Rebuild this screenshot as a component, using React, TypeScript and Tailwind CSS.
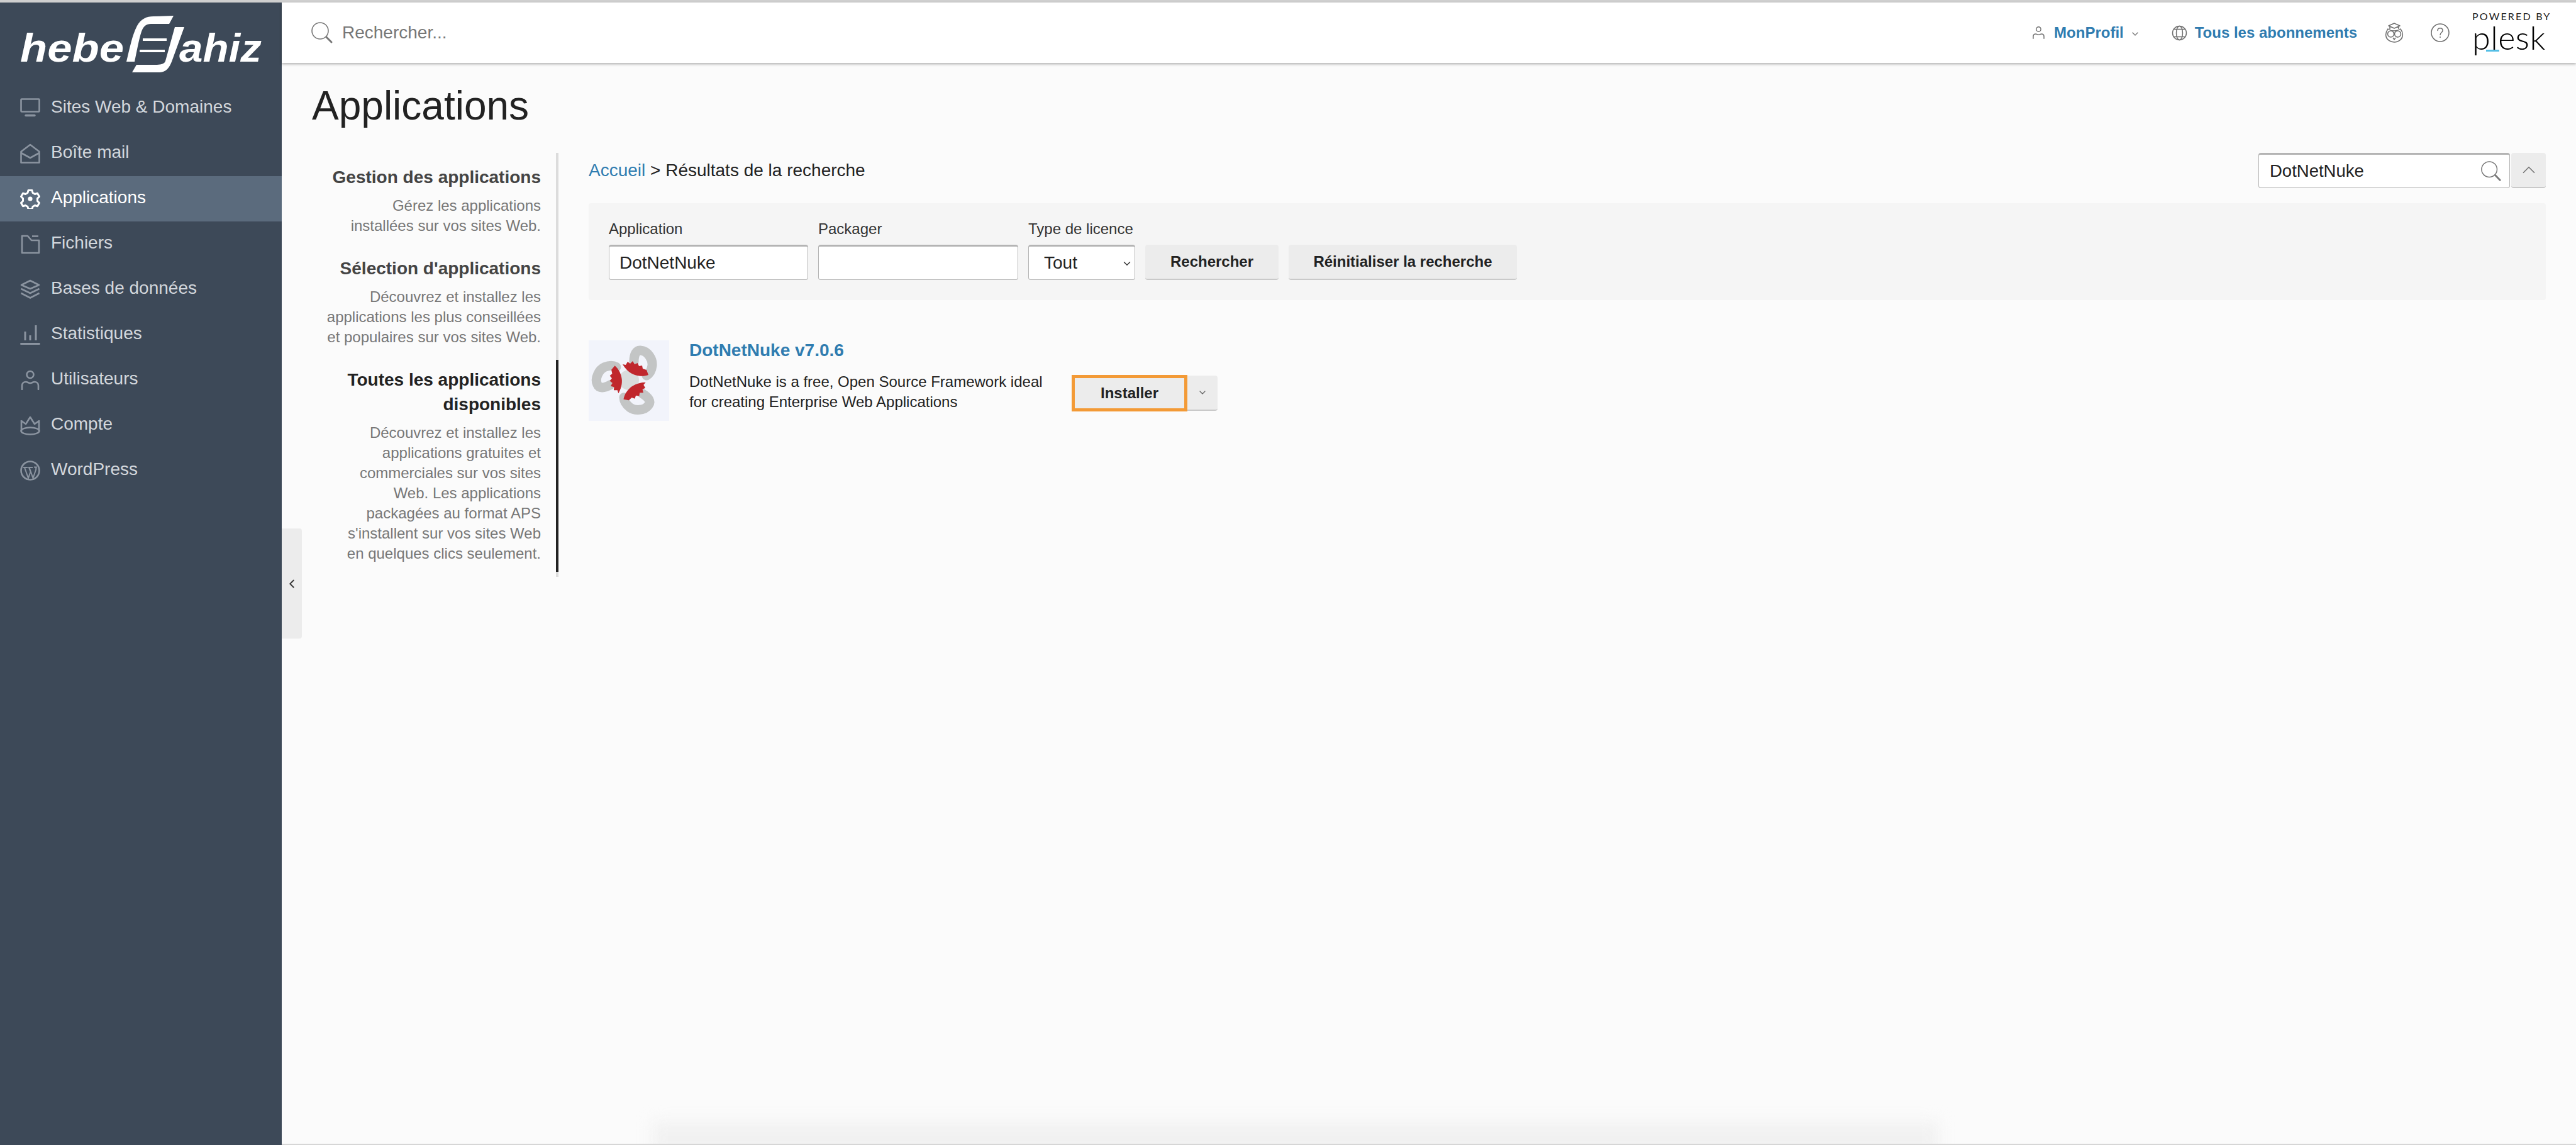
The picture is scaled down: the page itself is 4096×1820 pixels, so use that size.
import { ChevronDown, ChevronLeft, ChevronUp } from "lucide-react"
import type { ReactNode } from "react"

const iconProps = {
  width: 32,
  height: 32,
  viewBox: "0 0 32 32",
  fill: "none",
  stroke: "currentColor",
  strokeWidth: 2.6,
}

function IconMonitor() {
  return (
    <svg {...iconProps}>
      <rect x="1.5" y="1.5" width="29" height="20" rx="1" />
      <path d="M9 27.5h14" strokeWidth="3.4" strokeLinecap="round" />
    </svg>
  )
}

function IconMail() {
  return (
    <svg {...iconProps}>
      <path d="M1.5 13 16 2l14.5 11v17.5h-29z" strokeLinejoin="round" />
      <path d="M1.5 15 16 23l14.5-8" />
    </svg>
  )
}

function IconGear() {
  return (
    <svg {...iconProps} strokeWidth={3}>
      <path
        d="M13 2.5h6l1 4 3.5 2 4-1.2 3 5.2-3 2.9v4.2l3 2.9-3 5.2-4-1.2-3.5 2-1 4h-6l-1-4-3.5-2-4 1.2-3-5.2 3-2.9v-4.2l-3-2.9 3-5.2 4 1.2 3.5-2z"
        strokeLinejoin="round"
      />
      <circle cx="16" cy="16" r="3.6" fill="currentColor" stroke="none" />
    </svg>
  )
}

function IconFolder() {
  return (
    <svg {...iconProps}>
      <path d="M3 3h9l6 7h12v20H3z" strokeLinejoin="round" />
      <path d="M19 3.5h10" />
    </svg>
  )
}

function IconLayers() {
  return (
    <svg {...iconProps}>
      <path d="M16 2 30 9l-14 6L2 9z" strokeLinejoin="round" />
      <path d="m1.5 15 14.5 7 14.5-7M1.5 22l14.5 7.5L30.5 22" />
    </svg>
  )
}

function IconChart() {
  return (
    <svg {...iconProps}>
      <path d="M1.5 30.5h29" strokeWidth="3" strokeLinecap="round" />
      <path d="M8 11v14M16 17v8M25 1v24" strokeWidth="3" />
    </svg>
  )
}

function IconUser() {
  return (
    <svg {...iconProps}>
      <circle cx="16" cy="7.5" r="5.5" />
      <path d="M3 31v-6c0-4 3-6 6-6 3 0 4 2 7 2s4-2 7-2c3 0 6 2 6 6v6" strokeLinecap="round" />
    </svg>
  )
}

function IconCrown() {
  return (
    <svg {...iconProps}>
      <path d="M2 8v17M30 8v17M2 9l7 5 7-11 7 11 7-5" strokeLinejoin="round" />
      <ellipse cx="16" cy="25" rx="14.5" ry="5.5" />
    </svg>
  )
}

function IconWordpress() {
  return (
    <svg {...iconProps}>
      <circle cx="16" cy="16" r="14.5" />
      <path
        d="M5 11h7M13 11h7M22 10.5h5M7 11l6 17 3.5-10-2.5-7M14.5 11l6 17 4.5-13c.8-2 .5-3-.5-4.5"
        strokeWidth="2"
      />
    </svg>
  )
}

function IconGlobe() {
  return (
    <svg width="25" height="25" viewBox="0 0 25 25" fill="none" stroke="#6f6f6f" strokeWidth="1.5">
      <circle cx="12.5" cy="12.5" r="11" />
      <ellipse cx="12.5" cy="12.5" rx="5" ry="11" />
      <path d="M3 6.5h19M3 18.5h19" />
    </svg>
  )
}

function IconOwl() {
  return (
    <svg width="30" height="32" viewBox="0 0 30 32" fill="none" stroke="#6f6f6f" strokeWidth="1.5">
      <path d="m15 1 9 4-9 4-9-4zM8 6v4M22 6v4" strokeLinejoin="round" />
      <path d="M5 10c-3 4-4 8-3 12 1 5 7 9 13 9s12-4 13-9c1-4 0-8-3-12-3 2-6 3-10 3s-7-1-10-3z" />
      <circle cx="9.5" cy="18" r="5" />
      <circle cx="20.5" cy="18" r="5" />
      <path d="m13 24 2 3 2-3" />
    </svg>
  )
}

function IconHelp() {
  return (
    <svg width="30" height="30" viewBox="0 0 30 30" fill="none" stroke="#6f6f6f" strokeWidth="1.5">
      <circle cx="15" cy="15" r="14" />
      <path d="M11 11.5c0-5 8-5 8 0 0 3.5-4 3-4 7" strokeLinecap="round" />
      <circle cx="15" cy="22" r="1" fill="#6f6f6f" stroke="none" />
    </svg>
  )
}

function IconSearch({ size }: { size: number }) {
  return (
    <svg width={size} height={size} viewBox="0 0 36 36" fill="none" stroke="#777" strokeWidth="1.6">
      <circle cx="15" cy="15" r="13" />
      <path d="m25 25 8 8" strokeWidth="3" strokeLinecap="round" />
    </svg>
  )
}

function HebergLogo() {
  return (
    <svg width="400" height="120" viewBox="0 0 400 120" className="ml-[32px]">
      <g fontFamily="'Liberation Sans', Arial, sans-serif" fontWeight="700" fontStyle="italic" fill="#fff">
        <text x="0" y="94" fontSize="63" textLength="165" lengthAdjust="spacingAndGlyphs">
          hebe
        </text>
        <text x="253" y="94" fontSize="63" textLength="131" lengthAdjust="spacingAndGlyphs">
          ahiz
        </text>
      </g>
      <path
        d="M169 94c5-20 9-42 17-57 6-11 15-15 26-15l32-1-7 13h-29c-8 0-12 4-15 12-4 12-7 29-11 48z"
        fill="#fff"
      />
      <path
        d="M261 39h-15l-15 54c-1 4-6 6-16 6h-30l-7 12h43c11 0 16-7 20-17z"
        fill="#fff"
      />
      <path d="M195 59h38M190 77h40" stroke="#fff" strokeWidth="4" />
    </svg>
  )
}

function DnnIcon() {
  const arm = (
    <g>
      <path d="M72 34c0-12 4-19 11-18 11 1 19 14 18 24-1 8-4 13-9 16" fill="none" stroke="#c3c5c5" strokeWidth="15" strokeLinecap="round" />
      <path
        d="M54 38l5 1 3-5 4 3 4-4 3 5 5-2 2 5 5-1 1 5 6 2 3 8c-8 3-17 2-24-1-7-3-13-9-17-16z"
        fill="#c0272d"
      />
    </g>
  )
  return (
    <svg width="128" height="128" viewBox="0 0 128 128" className="shrink-0 bg-[#f2f4fb]">
      <circle cx="64" cy="63" r="16" fill="#d9dcdc" />
      {arm}
      <g transform="rotate(120 64 63)">{arm}</g>
      <g transform="rotate(240 64 63)">{arm}</g>
    </svg>
  )
}

const navItems: { label: string; icon: ReactNode; active?: boolean }[] = [
  { label: "Sites Web & Domaines", icon: <IconMonitor /> },
  { label: "Boîte mail", icon: <IconMail /> },
  { label: "Applications", icon: <IconGear />, active: true },
  { label: "Fichiers", icon: <IconFolder /> },
  { label: "Bases de données", icon: <IconLayers /> },
  { label: "Statistiques", icon: <IconChart /> },
  { label: "Utilisateurs", icon: <IconUser /> },
  { label: "Compte", icon: <IconCrown /> },
  { label: "WordPress", icon: <IconWordpress /> },
]

const sideLinks = [
  {
    title: ["Gestion des applications"],
    text: ["Gérez les applications", "installées sur vos sites Web."],
  },
  {
    title: ["Sélection d'applications"],
    text: ["Découvrez et installez les", "applications les plus conseillées", "et populaires sur vos sites Web."],
  },
  {
    title: ["Toutes les applications", "disponibles"],
    text: [
      "Découvrez et installez les",
      "applications gratuites et",
      "commerciales sur vos sites",
      "Web. Les applications",
      "packagées au format APS",
      "s'installent sur vos sites Web",
      "en quelques clics seulement.",
    ],
    active: true,
  },
]

const fieldClass =
  "h-[56px] rounded-[4px] border border-[#b4b4b4] border-t-[3px] bg-white px-[16px] text-[28px] text-[#222] outline-none"

export default function App() {
  return (
    <div className="relative flex h-[1820px] w-[4096px] flex-col overflow-hidden bg-[#fbfbfb] font-['Liberation_Sans',Arial,sans-serif]">
      <div className="h-[4px] shrink-0 bg-[#cfcfcf]" />
      <div className="flex min-h-0 flex-1">
        {/* Sidebar */}
        <aside className="flex w-[448px] shrink-0 flex-col bg-[#3d4958]">
          <div className="h-[132px]">
            <HebergLogo />
          </div>
          <nav className="flex flex-col">
            {navItems.map((item) => (
              <div
                key={item.label}
                className={`flex h-[72px] items-center gap-[17px] pl-[32px] text-[28px] ${
                  item.active ? "bg-[#5b6b7d] text-white" : "text-[#d3d7dc]"
                }`}
              >
                <span className={item.active ? "text-white" : "text-[#8b94a0]"}>{item.icon}</span>
                <span className="-translate-y-[2px]">{item.label}</span>
              </div>
            ))}
          </nav>
        </aside>

        <div className="relative flex min-w-0 flex-1 flex-col">
          {/* Top bar */}
          <header className="z-10 flex h-[96px] shrink-0 items-center bg-white pr-[48px] pl-[46px] shadow-[0_2px_4px_rgba(0,0,0,0.3)]">
            <IconSearch size={36} />
            <span className="ml-[14px] text-[28px] text-[#777]">Rechercher...</span>
            <div className="ml-auto flex items-center">
              <span className="text-[#6f6f6f]">
                <svg width="21" height="24" viewBox="0 0 32 32" fill="none" stroke="currentColor" strokeWidth="2.2">
                  <circle cx="16" cy="7.5" r="5.5" />
                  <path d="M3 31v-6c0-4 3-6 6-6 3 0 4 2 7 2s4-2 7-2c3 0 6 2 6 6v6" />
                </svg>
              </span>
              <span className="ml-[14px] text-[24px] font-bold text-[#2f7cb0]">MonProfil</span>
              <ChevronDown className="mt-[3px] ml-[10px] text-[#777]" size={16} strokeWidth={2} />
              <span className="ml-[50px]">
                <IconGlobe />
              </span>
              <span className="ml-[12px] text-[24px] font-bold text-[#2f7cb0]">Tous les abonnements</span>
              <span className="ml-[44px]">
                <IconOwl />
              </span>
              <span className="ml-[43px]">
                <IconHelp />
              </span>
              <div className="relative ml-[36px] flex h-[70px] w-[117px] flex-col items-start">
                <span className="font-['Lato','Open_Sans',sans-serif] text-[16px] leading-[18px] tracking-[2.2px] whitespace-nowrap text-[#222]">
                  POWERED BY
                </span>
                <span className="font-['Lato','Open_Sans',sans-serif] text-[52px] leading-[48px] font-light tracking-[0.5px] text-black">
                  plesk
                </span>
                <span className="absolute top-[62px] left-[22px] h-[3px] w-[21px] bg-[#55bfe6]" />
              </div>
            </div>
          </header>

          {/* Main */}
          <main className="flex min-h-0 flex-1 flex-col pr-[48px] pl-[48px]">
            <h1 className="mt-[30px] text-[64px] leading-[76px] font-normal text-[#222]">Applications</h1>
            <div className="mt-[37px] flex">
              <div className="flex w-[392px] flex-col items-end gap-[7px] border-r-[4px] border-[#dcdcdc] pt-[7px] pr-[24px] pb-[8px] text-right">
                {sideLinks.map((link) => (
                  <div key={link.title[0]} className="relative -mr-[28px] w-[420px] pt-[12px] pr-[28px] pb-[13px]">
                    {link.active && <span className="absolute top-0 right-0 bottom-0 w-[4px] bg-[#222]" />}
                    <div className={`text-[28px] leading-[39px] font-bold ${link.active ? "text-[#222]" : "text-[#444]"}`}>
                      {link.title.map((line) => (
                        <div key={line}>{line}</div>
                      ))}
                    </div>
                    <div className="mt-[10px] text-[24px] leading-[32px] text-[#777]">
                      {link.text.map((line) => (
                        <div key={line}>{line}</div>
                      ))}
                    </div>
                  </div>
                ))}
              </div>

              <div className="ml-[48px] min-w-0 flex-1">
                <div className="flex h-[56px] items-center justify-between">
                  <div className="-mt-[1px] text-[28px] text-[#222]">
                    <span className="text-[#2f7cb0]">Accueil</span> {">"} Résultats de la recherche
                  </div>
                  <div className="flex">
                    <div className="flex h-[56px] w-[400px] items-center justify-between rounded-[4px] border border-t-[3px] border-[#b4b4b4] bg-white pr-[12px] pl-[17px]">
                      <span className="text-[27.5px] text-[#222]">DotNetNuke</span>
                      <IconSearch size={34} />
                    </div>
                    <div className="ml-[2px] flex h-[56px] w-[55px] items-center justify-center rounded-[4px] border-b-[2px] border-[#c9c9c9] bg-[#ececec]">
                      <ChevronUp size={34} strokeWidth={1.2} className="text-[#777]" />
                    </div>
                  </div>
                </div>

                <div className="mt-[24px] h-[154px] rounded-[4px] bg-[#f5f5f5] pt-[28px] pl-[32px]">
                  <div className="flex gap-[16px] text-[24px] leading-[26px] text-[#333]">
                    <label className="w-[317px]">Application</label>
                    <label className="w-[318px]">Packager</label>
                    <label className="w-[170px] whitespace-nowrap">Type de licence</label>
                  </div>
                  <div className="mt-[12px] flex gap-[16px]">
                    <input readOnly value="DotNetNuke" className={`w-[317px] ${fieldClass}`} />
                    <input readOnly value="" className={`w-[318px] ${fieldClass}`} />
                    <div className="relative w-[170px]">
                      <select className={`w-full appearance-none pl-[24px] ${fieldClass}`} defaultValue="Tout">
                        <option>Tout</option>
                      </select>
                      <ChevronDown
                        size={18}
                        strokeWidth={2}
                        className="pointer-events-none absolute top-[21px] right-[4px] text-[#333]"
                      />
                    </div>
                    <button className="h-[56px] w-[212px] rounded-[4px] border-b-[2px] border-[#c9c9c9] bg-[#ececec] text-[24px] font-bold text-[#222]">
                      Rechercher
                    </button>
                    <button className="h-[56px] w-[363px] rounded-[4px] border-b-[2px] border-[#c9c9c9] bg-[#ececec] text-[24px] font-bold text-[#222]">
                      Réinitialiser la recherche
                    </button>
                  </div>
                </div>

                <div className="mt-[64px] flex">
                  <DnnIcon />
                  <div className="ml-[32px] w-[608px]">
                    <div className="text-[28px] leading-[32px] font-bold text-[#2f7cb0]">DotNetNuke v7.0.6</div>
                    <div className="mt-[18px] text-[24px] leading-[32px] text-[#222]">
                      <div>DotNetNuke is a free, Open Source Framework ideal</div>
                      <div>for creating Enterprise Web Applications</div>
                    </div>
                  </div>
                  <div className="mt-[55px] flex h-[58px]">
                    <button className="h-[58px] w-[184px] border-[5px] border-[#f39a36] bg-[#ececec] text-[24px] font-bold text-[#222]">
                      Installer
                    </button>
                    <div className="mt-[1px] flex h-[56px] w-[48px] items-center justify-center rounded-r-[4px] border-b-[2px] border-[#c9c9c9] bg-[#ececec]">
                      <ChevronDown size={16} strokeWidth={2} className="text-[#666]" />
                    </div>
                  </div>
                </div>
              </div>
            </div>
          </main>

          {/* Sidebar collapse handle */}
          <div className="absolute top-[836px] left-0 flex h-[175px] w-[32px] items-center justify-center rounded-r-[4px] bg-[#ececec]">
            <ChevronLeft size={22} strokeWidth={2} className="text-[#333]" />
          </div>

          {/* Bottom edge */}
          <div className="absolute right-[1014px] bottom-[-14px] left-[590px] h-[50px] bg-[#f1f1f1] blur-[12px]" />
          <div className="absolute right-0 bottom-0 left-0 h-[2px] bg-[#d6d6d6]" />
        </div>
      </div>
    </div>
  )
}
